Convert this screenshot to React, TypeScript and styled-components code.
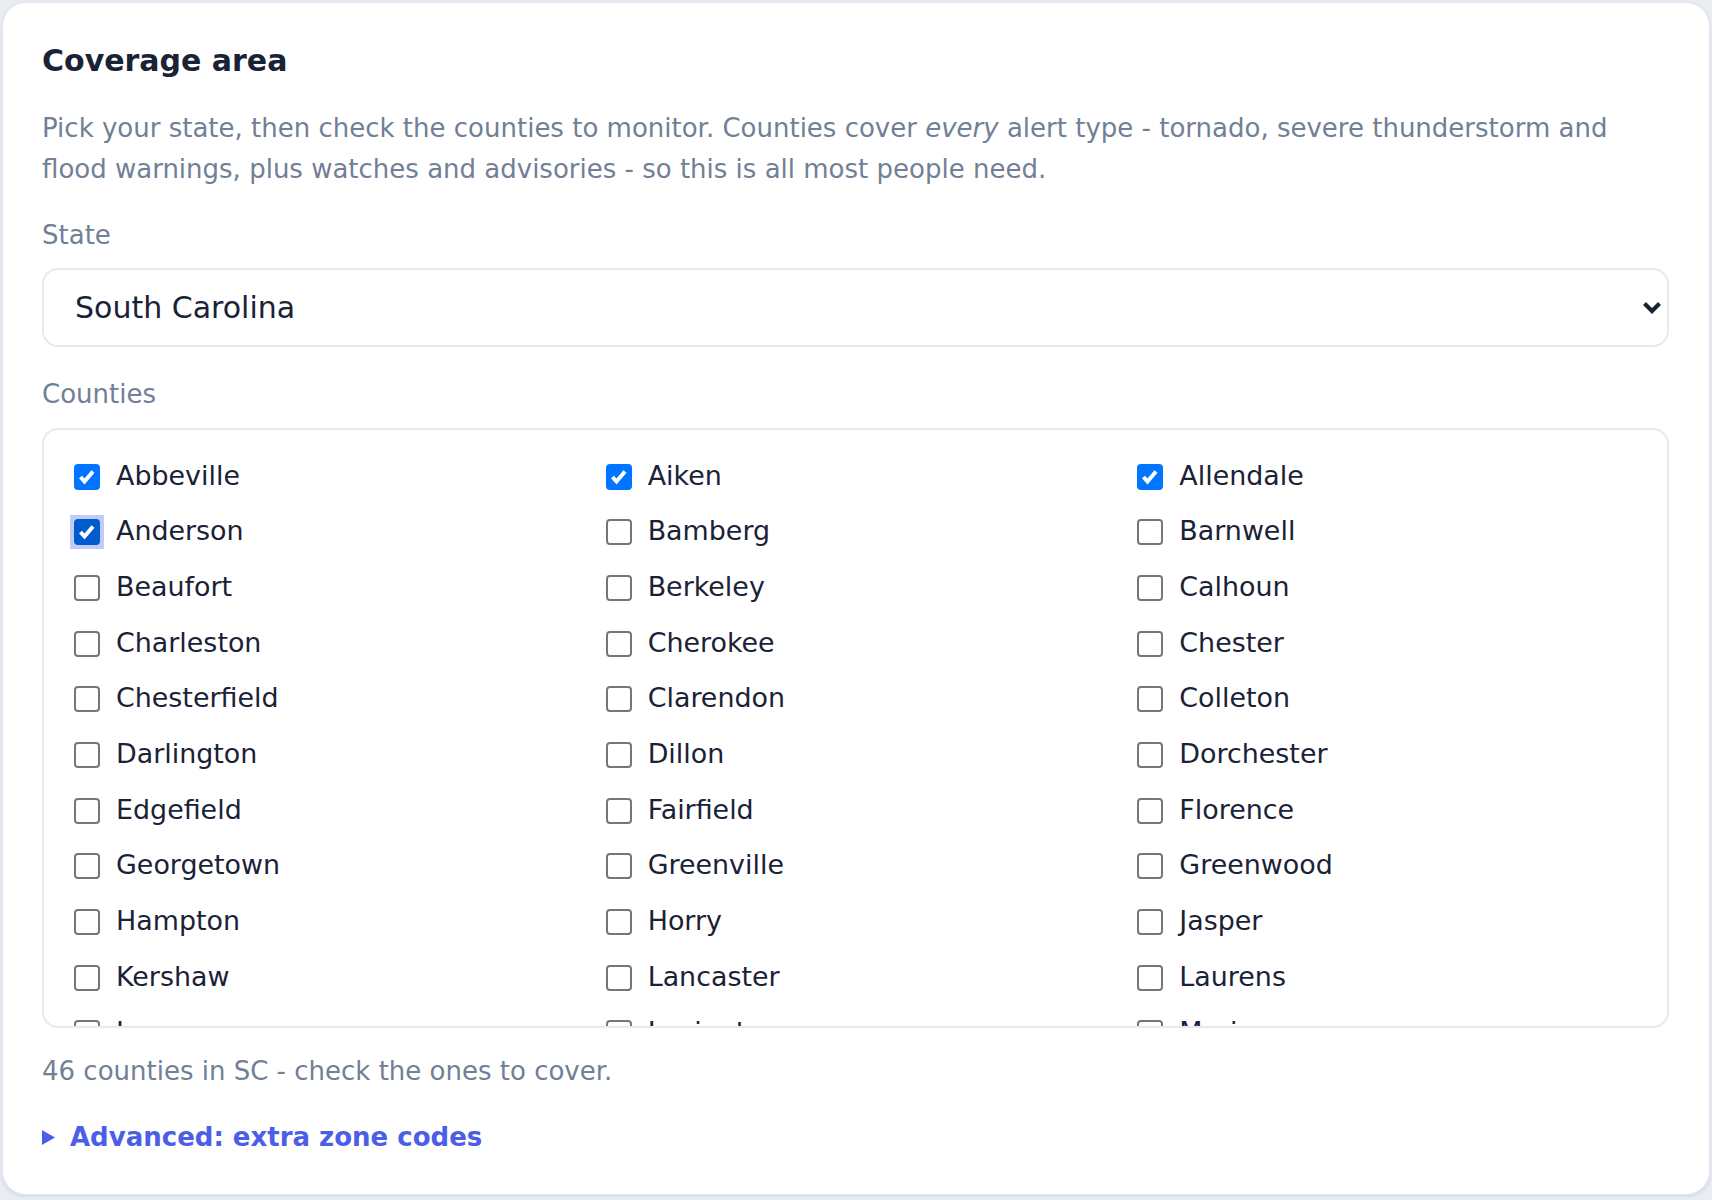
import React from "react";
import styled, { createGlobalStyle } from "styled-components";

// Global page styles
const GlobalStyle = createGlobalStyle`
  html, body {
    margin: 0;
    padding: 0;
    background: #e8ecf3;
  }
  body {
    font-family: "DejaVu Sans", "Noto Sans", sans-serif;
    -webkit-font-smoothing: antialiased;
  }
`;

const Page = styled.div`
  padding: 2px;
`;

const Card = styled.section`
  box-sizing: border-box;
  height: 1193px;
  background: #fff;
  border: 1px solid #e3e8f0;
  border-radius: 24px;
  box-shadow: 0 2px 4px rgba(15, 23, 42, 0.08);
  padding: 40px 40px 0 39px;
  display: flex;
  flex-direction: column;
`;

const Title = styled.h2`
  margin: 0;
  font-size: 30px;
  line-height: 35.5px;
  font-weight: 700;
  color: #1a2236;
`;

const Description = styled.p`
  margin: 29px 0 0;
  font-size: 26px;
  line-height: 41px;
  color: #718096;

  em {
    font-style: italic;
  }
`;

const FieldLabel = styled.label<{ $above: number; $below: number }>`
  display: block;
  margin: ${(p) => p.$above}px 0 ${(p) => p.$below}px;
  font-size: 26px;
  line-height: 41px;
  color: #718096;
`;

const SelectWrap = styled.div`
  position: relative;
`;

const Select = styled.select`
  box-sizing: border-box;
  width: 100%;
  height: 79px;
  appearance: none;
  -webkit-appearance: none;
  background: #fff;
  border: 2px solid #e4e9f2;
  border-radius: 16px;
  padding: 0 60px 0 31px;
  font-family: inherit;
  font-size: 30px;
  color: #1a2236;
  outline: none;
`;

const Chevron = styled.svg`
  position: absolute;
  right: 7px;
  top: 50%;
  transform: translateY(-50%);
  pointer-events: none;
`;

const CountyBox = styled.div`
  box-sizing: border-box;
  height: 600px;
  border: 2px solid #e4e9f2;
  border-radius: 16px;
  padding: 26px 30px;
  overflow: hidden;
  display: grid;
  grid-template-columns: repeat(3, 1fr);
  column-gap: 32px;
  row-gap: 15.7px;
  align-content: start;
`;

const CountyItem = styled.label`
  display: flex;
  align-items: center;
  gap: 16px;
  font-size: 26.9px;
  line-height: 40px;
  color: #1a2236;
  cursor: pointer;
`;

const CheckFrame = styled.span<{ $focused: boolean }>`
  display: flex;
  padding: 4px;
  margin: 2px -4px 0;
  background: ${(p) => (p.$focused ? "#c3cbf5" : "transparent")};
`;

const CheckBox = styled.span<{ $checked: boolean; $dark: boolean }>`
  box-sizing: border-box;
  width: 26px;
  height: 26px;
  border-radius: 4px;
  display: flex;
  align-items: center;
  justify-content: center;
  border: ${(p) => (p.$checked ? "none" : "2px solid #767676")};
  background: ${(p) =>
    p.$checked ? (p.$dark ? "#005ccc" : "#0075ff") : "#fff"};
`;

const Hint = styled.p`
  margin: 23.5px 0 0;
  font-size: 26px;
  line-height: 41px;
  color: #718096;
`;

const Advanced = styled.details`
  margin-top: 25px;
`;

const AdvancedSummary = styled.summary`
  display: flex;
  align-items: center;
  gap: 15px;
  list-style: none;
  cursor: pointer;
  font-size: 26px;
  line-height: 41px;
  font-weight: 700;
  color: #4c5ee8;

  &::-webkit-details-marker {
    display: none;
  }
`;

const counties = [
  "Abbeville", "Aiken", "Allendale", "Anderson", "Bamberg", "Barnwell",
  "Beaufort", "Berkeley", "Calhoun", "Charleston", "Cherokee", "Chester",
  "Chesterfield", "Clarendon", "Colleton", "Darlington", "Dillon", "Dorchester",
  "Edgefield", "Fairfield", "Florence", "Georgetown", "Greenville", "Greenwood",
  "Hampton", "Horry", "Jasper", "Kershaw", "Lancaster", "Laurens",
  "Lee", "Lexington", "Marion", "Marlboro", "McCormick", "Newberry",
  "Oconee", "Orangeburg", "Pickens", "Richland", "Saluda", "Spartanburg",
  "Sumter", "Union", "Williamsburg", "York",
];

const initialChecked = ["Abbeville", "Aiken", "Allendale", "Anderson"];

const App: React.FC = () => {
  const [checked, setChecked] = React.useState<string[]>(initialChecked);
  const [focused, setFocused] = React.useState<string>("Anderson");

  const toggle = (name: string) => {
    setFocused(name);
    setChecked((prev) =>
      prev.includes(name) ? prev.filter((c) => c !== name) : [...prev, name]
    );
  };

  return (
    <Page>
      <GlobalStyle />
      <Card>
        <Title>Coverage area</Title>
        <Description>
          Pick your state, then check the counties to monitor. Counties cover{" "}
          <em>every</em> alert type - tornado, severe thunderstorm and flood
          warnings, plus watches and advisories - so this is all most people
          need.
        </Description>

        <FieldLabel $above={25.5} $below={12} htmlFor="state">
          State
        </FieldLabel>
        <SelectWrap>
          <Select id="state" defaultValue="SC">
            <option value="NC">North Carolina</option>
            <option value="SC">South Carolina</option>
            <option value="GA">Georgia</option>
          </Select>
          <Chevron width="20" height="14" viewBox="0 0 20 14">
            <polyline
              points="2.5,2.5 10,10 17.5,2.5"
              fill="none"
              stroke="#1a2236"
              strokeWidth="4.2"
            />
          </Chevron>
        </SelectWrap>

        <FieldLabel $above={27} $below={12.5}>
          Counties
        </FieldLabel>
        <CountyBox>
          {counties.map((name) => {
            const on = checked.includes(name);
            const isFocused = focused === name;
            return (
              <CountyItem key={name} onClick={() => toggle(name)}>
                <CheckFrame $focused={isFocused}>
                  <CheckBox $checked={on} $dark={isFocused}>
                    {on && (
                      <svg width="26" height="26" viewBox="0 0 26 26">
                        <polyline
                          points="6.5,13 10.5,17.5 19,7.5"
                          fill="none"
                          stroke="#fff"
                          strokeWidth="4"
                        />
                      </svg>
                    )}
                  </CheckBox>
                </CheckFrame>
                {name}
              </CountyItem>
            );
          })}
        </CountyBox>

        <Hint>46 counties in SC - check the ones to cover.</Hint>

        <Advanced>
          <AdvancedSummary>
            <svg width="13" height="15" viewBox="0 0 13 15">
              <polygon points="0,0 13,7.5 0,15" fill="#4c5ee8" />
            </svg>
            Advanced: extra zone codes
          </AdvancedSummary>
        </Advanced>
      </Card>
    </Page>
  );
};

export default App;
